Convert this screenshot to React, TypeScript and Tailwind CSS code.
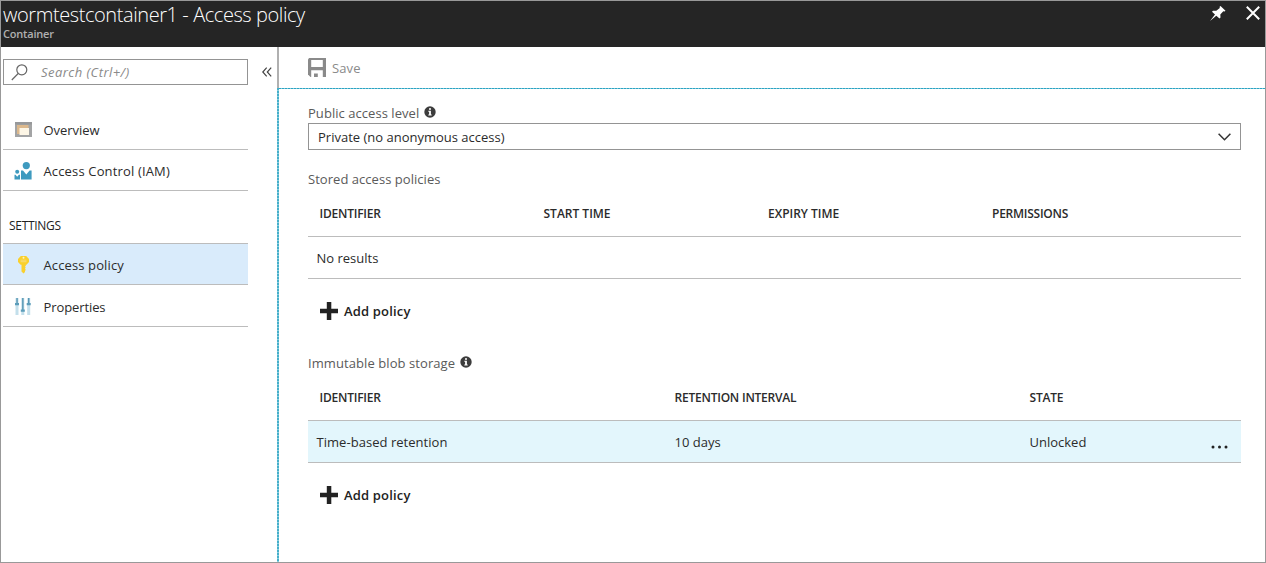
import React from "react";

const Info = () => (
  <svg width="12" height="12" viewBox="0 0 12 12" className="mb-[4px]">
    <circle cx="6" cy="6" r="5.7" fill="#3c3c3c" />
    <path d="M5 2.2h2v1.6H5zM4.3 4.8h2.6v3.800h.8v1H4.3v-1h.8V5.800h-.8z" fill="#fff" />
  </svg>
);

const Plus = () => (
  <svg width="18" height="18" viewBox="0 0 18 18" className="mb-[3px]">
    <path d="M6.800 0h4.500v6.800H18v4.400h-6.700V18H6.800v-6.800H0V6.800h6.800z" fill="#222" />
  </svg>
);

const OverviewIcon = () => (
  <svg width="17" height="15" viewBox="0 0 17 15">
    <rect width="17" height="15" fill="#a3a4a5" />
    <rect width="17" height="2.500" fill="#97989a" />
    <rect x="2" y="3" width="11.500" height="9" fill="#dcb88c" />
    <rect x="4.500" y="6" width="9.500" height="7" fill="#fdf6e6" />
  </svg>
);

const PeopleIcon = () => (
  <svg width="18" height="18" viewBox="0 0 18 18" fill="#3e9abf" className="mt-[2px]">
    <circle cx="12.300" cy="3.600" r="3.600" />
    <path d="M7 8.500h2l3.300 4 3.300-4h2v9H7z" />
    <circle cx="3.200" cy="9.800" r="2" />
    <path d="M.5 12.800h1l1.700 2 1.700-2H6v4.700H.5z" />
  </svg>
);

const KeyIcon = () => (
  <svg width="11" height="18" viewBox="0 0 11 18" className="mt-[2px]">
    <path d="M2.800 0h5.400L11 2.900v3L8.500 8.700H7.800v1.200l-.9.900.9 1-.9 1 .9 1-.8 1.100v1L5.500 17.500 3.500 15.500V8.700h-.9L0 5.900v-3z" fill="#fad02c" />
    <path d="M2.500 4.200h6M2.500 5.700h6" stroke="#f6e08a" strokeWidth=".8" />
    <circle cx="5.500" cy="1.800" r="1" fill="#fff3c0" />
  </svg>
);

const SlidersIcon = () => (
  <svg width="16" height="17" viewBox="0 0 16 17" className="mt-px">
    <path d="M.5 0h3v17h-3zM6.300 0h3v17h-3zM12.200 0h3v17h-3z" fill="#c3dfeb" />
    <path d="M1.400 0h1.300v6H1.400zM7.200 0h1.300v13H7.200zM13.100 0h1.300v6h-1.300z" fill="#4c8fae" />
    <path d="M0 5h4v2.200H0zM5.800 11.500h4v2.200h-4zM11.700 5h4v2.200h-4z" fill="#5c9dba" />
  </svg>
);

type NavProps = { icon: React.ReactNode; label: string; className: string; text: string };

const NavItem = ({ icon, label, className, text }: NavProps) => (
  <div className={`flex items-center border-b border-[#bcbcbc] ${className}`}>
    <div className="flex w-[40.5px] shrink-0 justify-center">{icon}</div>
    <span className={text}>{label}</span>
  </div>
);

const AddPolicy = () => (
  <button className="ml-3 flex h-6 items-center gap-[6px] pt-[2px] text-[13px] font-semibold tracking-[0.17px] text-[#222]">
    <Plus />
    <span>Add policy</span>
  </button>
);

export default function App() {
  return (
    <div className="flex h-[563px] w-[1266px] flex-col overflow-hidden border border-[#999] bg-white font-['Open_Sans','Noto_Sans',sans-serif] text-[13px] whitespace-nowrap text-[#2b2b2b]">
      <header className="flex h-[46px] shrink-0 justify-between bg-[#252525]">
        <div className="pl-[2px]">
          <h1 className="mt-[1px] text-[20px] leading-[26px] font-light tracking-[-0.42px] text-white">wormtestcontainer1 - Access policy</h1>
          <p className="-mt-px text-[11px] leading-[14px] font-semibold tracking-[-0.2px] text-[#b0b0b0]">Container</p>
        </div>
        <div className="flex items-start gap-5 pt-[5px] pr-[5px]">
          <svg width="16" height="15" viewBox="0 0 16 15" fill="#fff">
            <path d="M10.500 0 15.500 4.700 14.600 5.500 13.300 5.300 10.300 8.600 10.500 11.600 9.500 12.600 6.300 9.700 0 15 5 8.600 2 5.700 3 4.700 6.300 4.800 9.800 1.900 9.600.8z" />
          </svg>
          <svg width="14" height="14" viewBox="0 0 14 14" fill="none" stroke="#fff" strokeWidth="2">
            <path d="M.8.8 13.200 13.200M13.200.8.8 13.200" />
          </svg>
        </div>
      </header>

      <div className="flex min-h-0 flex-1">
        <aside className="flex w-[276px] shrink-0 pl-[2px]">
          <nav className="w-[245px]">
            <div className="mt-3 flex h-[26px] items-center border border-[#949494] pl-[7px]">
              <svg width="17" height="17" viewBox="0 0 17 17" fill="none" stroke="#666" strokeWidth="1.2">
                <circle cx="10.800" cy="5.800" r="5" />
                <path d="M7.200 9.500.8 16" />
              </svg>
              <span className="ml-[13px] pt-px text-[13px] tracking-[0.45px] text-[#8a8a8a] italic">Search (Ctrl+/)</span>
            </div>
            <NavItem className="mt-[25px] h-10" icon={<OverviewIcon />} label="Overview" text="pt-[2px] tracking-[-0.05px]" />
            <NavItem className="h-[41px]" icon={<PeopleIcon />} label="Access Control (IAM)" text="pt-[3px] tracking-[0.15px]" />
            <h2 className="flex h-[53px] items-end border-b border-[#bcbcbc] pb-[8px] pl-[6px] text-[12px] tracking-[-0.3px] text-[#222]">SETTINGS</h2>
            <NavItem className="h-[41px] bg-[#d9ebfb]" icon={<KeyIcon />} label="Access policy" text="pt-[3px] tracking-[0.12px]" />
            <NavItem className="h-[42px]" icon={<SlidersIcon />} label="Properties" text="pt-[4px] tracking-[-0.1px]" />
          </nav>
          <button className="mt-[20px] ml-[14px] flex h-[10px] w-[10px]">
            <svg width="10" height="10" viewBox="0 0 10 10" fill="none" stroke="#444" strokeWidth="1.200">
              <path d="M4.700.7.8 5l3.900 4.300M9.200.7 5.300 5l3.900 4.300" />
            </svg>
          </button>
        </aside>

        <div className="flex w-[2px] shrink-0 flex-col">
          <div className="h-[41px] bg-[#b0b0b0]" />
          <div className="flex-1 bg-[repeating-linear-gradient(180deg,#45afca_0_2px,#8ccfdf_2px_3px)]" />
        </div>

        <main className="flex min-w-0 flex-1 flex-col">
          <div className="flex h-[41px] shrink-0 items-center pl-[29px] text-[#8a8a8a]">
            <svg width="18" height="19" viewBox="0 0 18 19">
              <path d="M0 1.200 1.200 0H18v19H2.500L0 16.500z" fill="#8a8a8a" />
              <path d="M3.200 2h11.600v7H3.200zM3.200 12.300h11.600V19h-5v-3.500H6V19H3.200z" fill="#fff" />
            </svg>
            <span className="ml-[6px] pt-[2px] tracking-[0.1px]">Save</span>
          </div>
          <div className="h-px shrink-0 bg-[repeating-linear-gradient(90deg,#2ba3c2_0_2px,#7cc8da_2px_3px)]" />
          <div className="flex-1 pr-6 pl-[29px]">
            <div className="mt-[14px] flex h-5 items-center gap-[5px] pt-[2px] text-[#5a5a5a]">
              <span className="tracking-[0.05px]">Public access level</span>
              <Info />
            </div>
            <div className="flex h-[27px] items-center justify-between border border-[#949494] pr-[9px] pl-[9px]">
              <span className="pt-[2px]">Private (no anonymous access)</span>
              <svg width="13" height="8" viewBox="0 0 13 8" fill="none" stroke="#333" strokeWidth="1.500">
                <path d="M.6.8 6.500 6.800 12.400.8" />
              </svg>
            </div>
            <h3 className="mt-[19px] leading-5 tracking-[0.04px] text-[#5a5a5a]">Stored access policies</h3>
            <div className="grid h-[48px] grid-cols-[224px_224.5px_224px_1fr] items-center border-b border-[#bcbcbc] pt-[2px] pl-[11.5px] text-[12px] font-semibold">
              <span className="tracking-[-0.22px]">IDENTIFIER</span>
              <span>START TIME</span>
              <span>EXPIRY TIME</span>
              <span className="tracking-[-0.25px]">PERMISSIONS</span>
            </div>
            <div className="mb-5 flex h-[42px] items-center border-b border-[#bcbcbc] pt-[2px] pl-[8.5px]">No results</div>
            <AddPolicy />
            <div className="mt-[30px] flex h-5 items-center gap-[5px] pt-[2px] text-[#5a5a5a]">
              <span className="tracking-[0.08px]">Immutable blob storage</span>
              <Info />
            </div>
            <div className="grid h-[48px] grid-cols-[355px_355px_1fr] items-center border-b border-[#bcbcbc] pt-[2px] pl-[11.5px] text-[12px] font-semibold tracking-[-0.22px]">
              <span>IDENTIFIER</span>
              <span>RETENTION INTERVAL</span>
              <span>STATE</span>
            </div>
            <div className="mb-5 grid h-[42px] grid-cols-[358px_355px_1fr_30px] items-center border-b border-[#bcbcbc] bg-[#e3f6fc] pt-[2px] pl-[8.5px]">
              <span className="tracking-[0.04px]">Time-based retention</span>
              <span>10 days</span>
              <span>Unlocked</span>
              <svg width="17" height="4" viewBox="0 0 17 4" fill="#222" className="mt-[8px]">
                <circle cx="2" cy="2" r="1.500" />
                <circle cx="8.500" cy="2" r="1.500" />
                <circle cx="15" cy="2" r="1.500" />
              </svg>
            </div>
            <AddPolicy />
          </div>
        </main>
      </div>
    </div>
  );
}
